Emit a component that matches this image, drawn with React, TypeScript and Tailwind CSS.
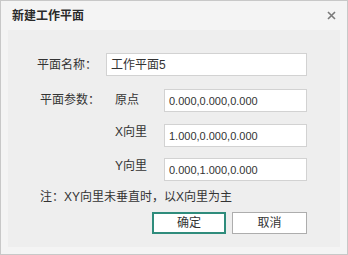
const font = { fontFamily: '"Liberation Sans", "Noto Sans CJK SC", sans-serif' };

const Field = ({
  value,
  width,
  size = "text-[11px]",
}: {
  value: string;
  width: string;
  size?: string;
}) => (
  <div
    className={`${width} ${size} flex h-[23px] items-center border border-[#d2d2d2] bg-white pl-[4px] text-[#333]`}
  >
    {value}
  </div>
);

export default function App() {
  return (
    <div
      className="flex h-[255px] w-[348px] flex-col border border-[#c8c8c8] bg-[#f4f4f4] text-[12px] text-[#333]"
      style={font}
    >
      {/* Title bar */}
      <div className="flex h-[29px] shrink-0 items-center justify-between pl-[11px] pr-[10px]">
        <span className="text-[12px] font-bold text-[#2a2a2a]">新建工作平面</span>
        <svg width="9" height="9" viewBox="0 0 9 9" className="mr-[1px]">
          <path d="M1 1L8 8M8 1L1 8" stroke="#7a7a7a" strokeWidth="1.6" />
        </svg>
      </div>

      {/* Body */}
      <div className="flex flex-1 flex-col px-[7px] pb-[7px]">
        <div className="flex flex-1 flex-col bg-[#eeeeee] pt-[23px] leading-[16px]">
          <div className="flex items-start pl-[29px]">
            <span className="w-[69px] pt-[4px]">平面名称：</span>
            <Field value="工作平面5" width="w-[201px]" size="text-[12px]" />
          </div>

          <div className="mt-[13px] flex items-start pl-[32px]">
            <span className="w-[75px] pt-[3px]">平面参数：</span>
            <span className="w-[49px] pt-[3px]">原点</span>
            <Field value="0.000,0.000,0.000" width="w-[143px]" />
          </div>

          <div className="mt-[12px] flex items-start pl-[107px]">
            <span className="w-[49px]">X向里</span>
            <Field value="1.000,0.000,0.000" width="w-[143px]" />
          </div>

          <div className="mt-[11px] flex items-start pl-[107px]">
            <span className="w-[49px]">Y向里</span>
            <Field value="0.000,1.000,0.000" width="w-[143px]" />
          </div>

          <div className="mt-[8px] pl-[32px]">注：XY向里未垂直时，以X向里为主</div>

          <div className="mt-[7px] flex gap-[6px] pl-[144px]">
            <button className="flex h-[22px] w-[74px] items-center justify-center border-2 border-[#2f8c7c] bg-white text-[12px] text-[#333]">
              确定
            </button>
            <button className="flex h-[22px] w-[75px] items-center justify-center border border-[#adadad] bg-white text-[12px] text-[#333]">
              取消
            </button>
          </div>
        </div>
      </div>
    </div>
  );
}
